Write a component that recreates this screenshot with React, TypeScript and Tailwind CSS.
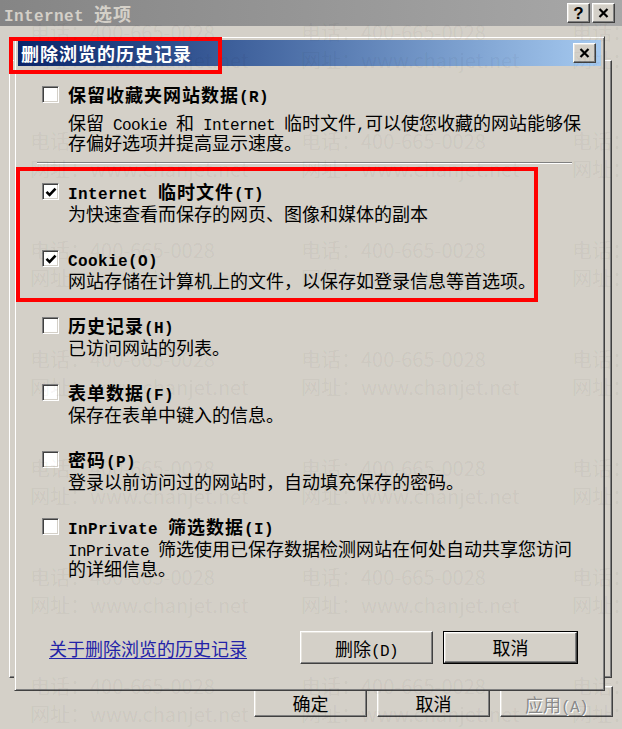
import React from "react";

const ASCII = /^[\x20-\x7e]+$/;

// half-width latin runs get a mono face so they take 9px, CJK stays at 18px
function Mixed({ text, bold }: { text: string; bold?: boolean }) {
	const parts = text.split(/([\x20-\x7e]+)/).filter((p) => p !== "");
	return (
		<>
			{parts.map((p, i) =>
				ASCII.test(p) ? (
					<span
						key={i}
						className={
							bold
								? "whitespace-pre font-['Liberation_Mono'] text-[16px] leading-none tracking-[0.4px]"
								: "whitespace-pre font-['Liberation_Mono'] text-[16px] leading-none tracking-[-0.6px]"
						}
					>
						{p}
					</span>
				) : (
					<span key={i}>{p}</span>
				)
			)}
		</>
	);
}

function Checkbox({ checked }: { checked?: boolean }) {
	return (
		<div className="mt-[3px] flex h-[17px] w-[17px] shrink-0 items-center justify-center border border-t-[#808080] border-l-[#808080] border-r-white border-b-white bg-white shadow-[inset_1px_1px_0_#404040,inset_-1px_-1px_0_#d4d0c8]">
			{checked && (
				<svg width="12" height="12" viewBox="0 0 12 12">
					<path d="M1.5 5.8 L4.6 8.9 L10.5 2.6" fill="none" stroke="#000" strokeWidth="2.6" />
				</svg>
			)}
		</div>
	);
}

function CloseGlyph() {
	return (
		<svg width="11" height="10" viewBox="0 0 11 10">
			<path d="M1.5 1 L9.5 9 M9.5 1 L1.5 9" stroke="#000" strokeWidth="2.2" />
		</svg>
	);
}

const raised =
	"border border-t-white border-l-white border-r-[#404040] border-b-[#404040] bg-[#d4d0c8] shadow-[inset_-1px_-1px_0_#808080,inset_1px_1px_0_#e6e3dc]";

type Item = { label: string; desc: string[]; checked?: boolean };

const items: Item[] = [
	{ label: "Internet 临时文件(T)", desc: ["为快速查看而保存的网页、图像和媒体的副本"], checked: true },
	{ label: "Cookie(O)", desc: ["网站存储在计算机上的文件，以保存如登录信息等首选项。"], checked: true },
	{ label: "历史记录(H)", desc: ["已访问网站的列表。"] },
	{ label: "表单数据(F)", desc: ["保存在表单中键入的信息。"] },
	{ label: "密码(P)", desc: ["登录以前访问过的网站时，自动填充保存的密码。"] },
	{
		label: "InPrivate 筛选数据(I)",
		desc: ["InPrivate 筛选使用已保存数据检测网站在何处自动共享您访问", "的详细信息。"],
	},
];

function Row({ item, first }: { item: Item; first?: boolean }) {
	return (
		<div className={first ? "flex" : "mt-[24px] flex"}>
			<Checkbox checked={item.checked} />
			<div className="ml-[9px]">
				<div className="h-[22px] whitespace-nowrap text-[18px] font-bold leading-[22px] tracking-[1px]">
					<Mixed text={item.label} bold />
				</div>
				<div className="mt-[1px] text-[18px] leading-[20px]">
					{item.desc.map((line) => (
						<div key={line} className="h-[20px] whitespace-nowrap">
							<Mixed text={line} />
						</div>
					))}
				</div>
			</div>
		</div>
	);
}

const marks = [0, 1, 2, 3, 4, 5, 6];

export default function App() {
	return (
		<div className="relative h-[729px] w-[622px] overflow-hidden bg-[#d4d0c8] font-['Noto_Sans_CJK_SC',sans-serif] text-black">
			{/* outer Internet 选项 window */}
			<div className="flex h-[26px] items-center bg-linear-to-r from-[#858585] to-[#a8a8a8] pl-[4px] pr-[7px]">
				<span className="h-[22px] text-[18px] font-bold leading-[22px] tracking-[1px] text-[#d4d0c8]">
					<Mixed text="Internet 选项" bold />
				</span>
				<div className="ml-auto flex gap-[2px]">
					<div className={`flex h-[20px] w-[23px] items-center justify-center ${raised}`}>
						<span className="font-['Liberation_Sans'] text-[17px] font-bold leading-none">?</span>
					</div>
					<div className={`flex h-[20px] w-[23px] items-center justify-center ${raised}`}>
						<CloseGlyph />
					</div>
				</div>
			</div>
			<div className="ml-[9px] mr-[10px] mt-[34px] h-[618px] border border-t-white border-l-white border-r-[#404040] border-b-[#404040] shadow-[inset_-1px_-1px_0_#808080]" />
			<div className="mt-[8px] flex justify-end gap-[10px] pr-[9px]">
				<div className={`flex h-[31px] w-[113px] items-center justify-center pt-[4px] text-[18px] ${raised}`}>确定</div>
				<div className={`flex h-[31px] w-[113px] items-center justify-center pt-[4px] text-[18px] ${raised}`}>取消</div>
				<div
					className={`flex h-[31px] w-[113px] items-center justify-center pt-[4px] text-[18px] text-[#8a8a8a] [text-shadow:1px_1px_0_#fff] ${raised}`}
				>
					<span className="h-[22px] leading-[22px]">
						<Mixed text="应用(A)" />
					</span>
				</div>
			</div>

			{/* 删除浏览的历史记录 dialog */}
			<div className="absolute left-[14px] top-[36px] flex h-[655px] w-[591px] flex-col overflow-hidden border border-t-[#d4d0c8] border-l-[#d4d0c8] border-r-[#404040] border-b-[#404040] bg-[#d4d0c8] p-[2px] shadow-[inset_1px_1px_0_#fff,inset_-1px_-1px_0_#808080]">
				<div className="mx-[1px] mt-[1px] flex h-[26px] shrink-0 items-center bg-linear-to-r from-[#0a246a] to-[#a6caf0] pl-[3px] pr-[5px]">
					<span className="h-[22px] text-[18px] font-bold leading-[22px] tracking-[1px] text-white">删除浏览的历史记录</span>
					<div className={`ml-auto flex h-[20px] w-[23px] items-center justify-center ${raised}`}>
						<CloseGlyph />
					</div>
				</div>
				<div className="flex flex-col pl-[25px] pr-[24px] pt-[17px]">
					<div className="flex">
						<Checkbox />
						<div className="ml-[9px]">
							<div className="h-[22px] whitespace-nowrap text-[18px] font-bold leading-[22px] tracking-[1px]">
								<Mixed text="保留收藏夹网站数据(R)" bold />
							</div>
							<div className="mt-[7px] text-[18px] leading-[20px]">
								<div className="h-[20px] whitespace-nowrap">
									<Mixed text="保留 Cookie 和 Internet 临时文件,可以使您收藏的网站能够保" />
								</div>
								<div className="h-[20px] whitespace-nowrap">存偏好选项并提高显示速度。</div>
							</div>
						</div>
					</div>
					<div className="ml-[-5px] mt-[10px] h-[2px] w-[535px] border-t border-t-[#808080] border-b border-b-white" />
					<div className="mt-[16px] flex flex-col">
						{items.map((item, i) => (
							<Row key={item.label} item={item} first={i === 0} />
						))}
					</div>
					<div className="mt-[53px] flex items-center">
						<span className="ml-[7px] h-[22px] text-[18px] leading-[22px] text-[#2323a8] underline underline-offset-2">
							关于删除浏览的历史记录
						</span>
						<div className="ml-auto flex gap-[10px]">
							<div className={`flex h-[33px] w-[133px] items-center justify-center text-[18px] ${raised}`}>
								<span className="h-[22px] leading-[22px]">
									<Mixed text="删除(D)" />
								</span>
							</div>
							<div className="h-[33px] w-[135px] border border-black">
								<div className={`flex h-full w-full items-center justify-center text-[18px] ${raised}`}>取消</div>
							</div>
						</div>
					</div>
				</div>
			</div>

			{/* red annotation frames */}
			<div className="pointer-events-none absolute left-[9px] top-[37px] h-[37px] w-[213px] border-4 border-[#ff0000]" />
			<div className="pointer-events-none absolute left-[16px] top-[167px] h-[135px] w-[522px] border-4 border-[#ff0000]" />

			{/* watermark */}
			<div className="pointer-events-none absolute inset-0 pl-[30px] pt-[18px] text-[20px] leading-[28px] text-black/[0.05]">
				{marks.map((m) => (
					<div key={m} className="flex h-[109px]">
						{[0, 1, 2].map((c) => (
							<div key={c} className="w-[271px] shrink-0 whitespace-nowrap">
								<div className="h-[28px]">电话：400-665-0028</div>
								<div className="h-[28px]">网址：www.chanjet.net</div>
							</div>
						))}
					</div>
				))}
			</div>
		</div>
	);
}
